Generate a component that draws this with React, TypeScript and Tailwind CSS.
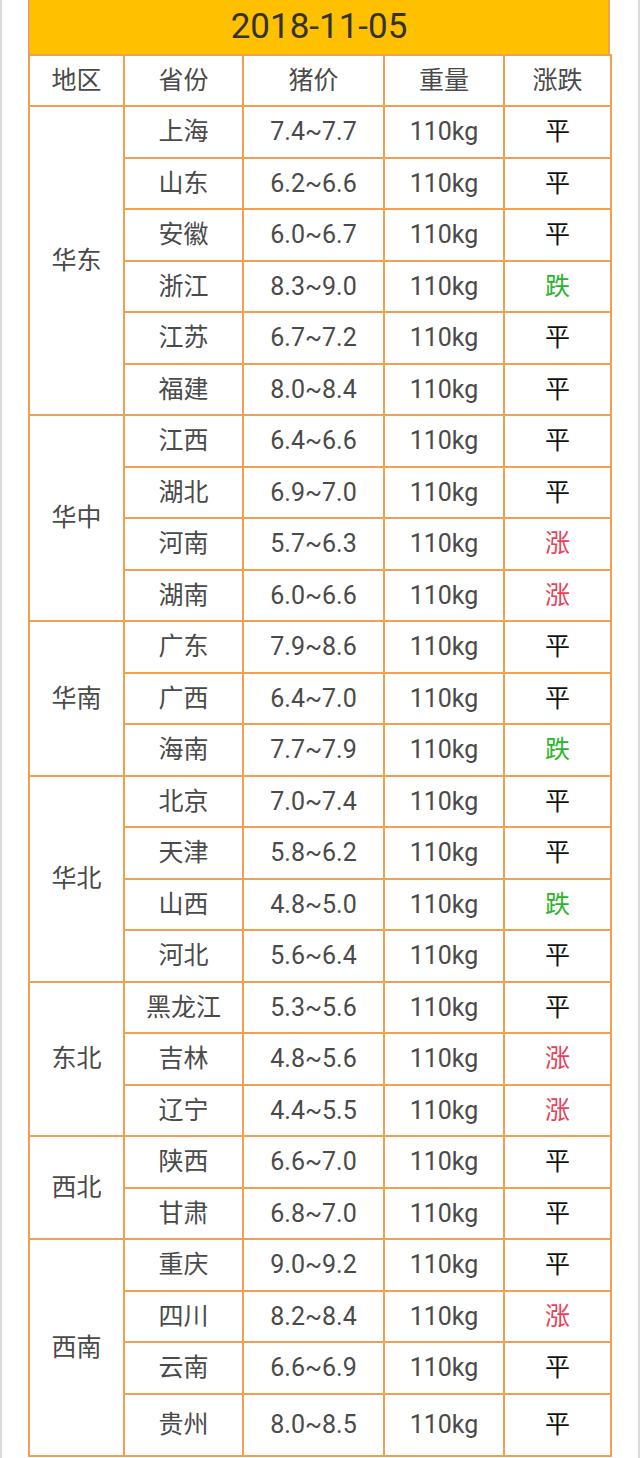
import React from 'react';

type Row = { province: string; price: string; trend: '平' | '涨' | '跌' };
type Region = { name: string; rows: Row[] };

const regions: Region[] = [
  {
    name: '华东',
    rows: [
      { province: '上海', price: '7.4~7.7', trend: '平' },
      { province: '山东', price: '6.2~6.6', trend: '平' },
      { province: '安徽', price: '6.0~6.7', trend: '平' },
      { province: '浙江', price: '8.3~9.0', trend: '跌' },
      { province: '江苏', price: '6.7~7.2', trend: '平' },
      { province: '福建', price: '8.0~8.4', trend: '平' },
    ],
  },
  {
    name: '华中',
    rows: [
      { province: '江西', price: '6.4~6.6', trend: '平' },
      { province: '湖北', price: '6.9~7.0', trend: '平' },
      { province: '河南', price: '5.7~6.3', trend: '涨' },
      { province: '湖南', price: '6.0~6.6', trend: '涨' },
    ],
  },
  {
    name: '华南',
    rows: [
      { province: '广东', price: '7.9~8.6', trend: '平' },
      { province: '广西', price: '6.4~7.0', trend: '平' },
      { province: '海南', price: '7.7~7.9', trend: '跌' },
    ],
  },
  {
    name: '华北',
    rows: [
      { province: '北京', price: '7.0~7.4', trend: '平' },
      { province: '天津', price: '5.8~6.2', trend: '平' },
      { province: '山西', price: '4.8~5.0', trend: '跌' },
      { province: '河北', price: '5.6~6.4', trend: '平' },
    ],
  },
  {
    name: '东北',
    rows: [
      { province: '黑龙江', price: '5.3~5.6', trend: '平' },
      { province: '吉林', price: '4.8~5.6', trend: '涨' },
      { province: '辽宁', price: '4.4~5.5', trend: '涨' },
    ],
  },
  {
    name: '西北',
    rows: [
      { province: '陕西', price: '6.6~7.0', trend: '平' },
      { province: '甘肃', price: '6.8~7.0', trend: '平' },
    ],
  },
  {
    name: '西南',
    rows: [
      { province: '重庆', price: '9.0~9.2', trend: '平' },
      { province: '四川', price: '8.2~8.4', trend: '涨' },
      { province: '云南', price: '6.6~6.9', trend: '平' },
      { province: '贵州', price: '8.0~8.5', trend: '平' },
    ],
  },
];

const trendColor = {
  平: 'text-[#111111]',
  涨: 'text-[#e8405a]',
  跌: 'text-[#2cb52c]',
};

const cell = 'border-2 border-[#f0a050] text-center align-middle p-0';

export default function App() {
  return (
    <div
      className="min-h-[1458px] bg-white border-l-2 border-r-2 border-[#d9d9d9]"
      style={{ fontFamily: 'Roboto, "Noto Sans CJK SC", sans-serif' }}
    >
      <div className="ml-[26px] w-[582px]">
        <div className="h-[54px] bg-[#ffc000] border-x-2 border-[#f0a050] flex items-center justify-center text-[35px] text-[#333333]">
          2018-11-05
        </div>
        <table className="w-full table-fixed border-collapse text-[25px] text-[#4a4a4a]">
          <colgroup>
            <col className="w-[95px]" />
            <col className="w-[119px]" />
            <col className="w-[141px]" />
            <col className="w-[120px]" />
            <col className="w-[107px]" />
          </colgroup>
          <thead>
            <tr className="h-[51px]">
              <th className={`${cell} font-normal`}>地区</th>
              <th className={`${cell} font-normal`}>省份</th>
              <th className={`${cell} font-normal`}>猪价</th>
              <th className={`${cell} font-normal`}>重量</th>
              <th className={`${cell} font-normal`}>涨跌</th>
            </tr>
          </thead>
          <tbody>
            {regions.map((region, ri) =>
              region.rows.map((row, i) => {
                const last = ri === regions.length - 1 && i === region.rows.length - 1;
                return (
                  <tr key={row.province} className={last ? 'h-[62px]' : 'h-[51.5px]'}>
                    {i === 0 && (
                      <td className={cell} rowSpan={region.rows.length}>
                        {region.name}
                      </td>
                    )}
                    <td className={cell}>{row.province}</td>
                    <td className={cell}>{row.price}</td>
                    <td className={cell}>110kg</td>
                    <td className={`${cell} ${trendColor[row.trend]}`}>{row.trend}</td>
                  </tr>
                );
              })
            )}
          </tbody>
        </table>
      </div>
    </div>
  );
}
